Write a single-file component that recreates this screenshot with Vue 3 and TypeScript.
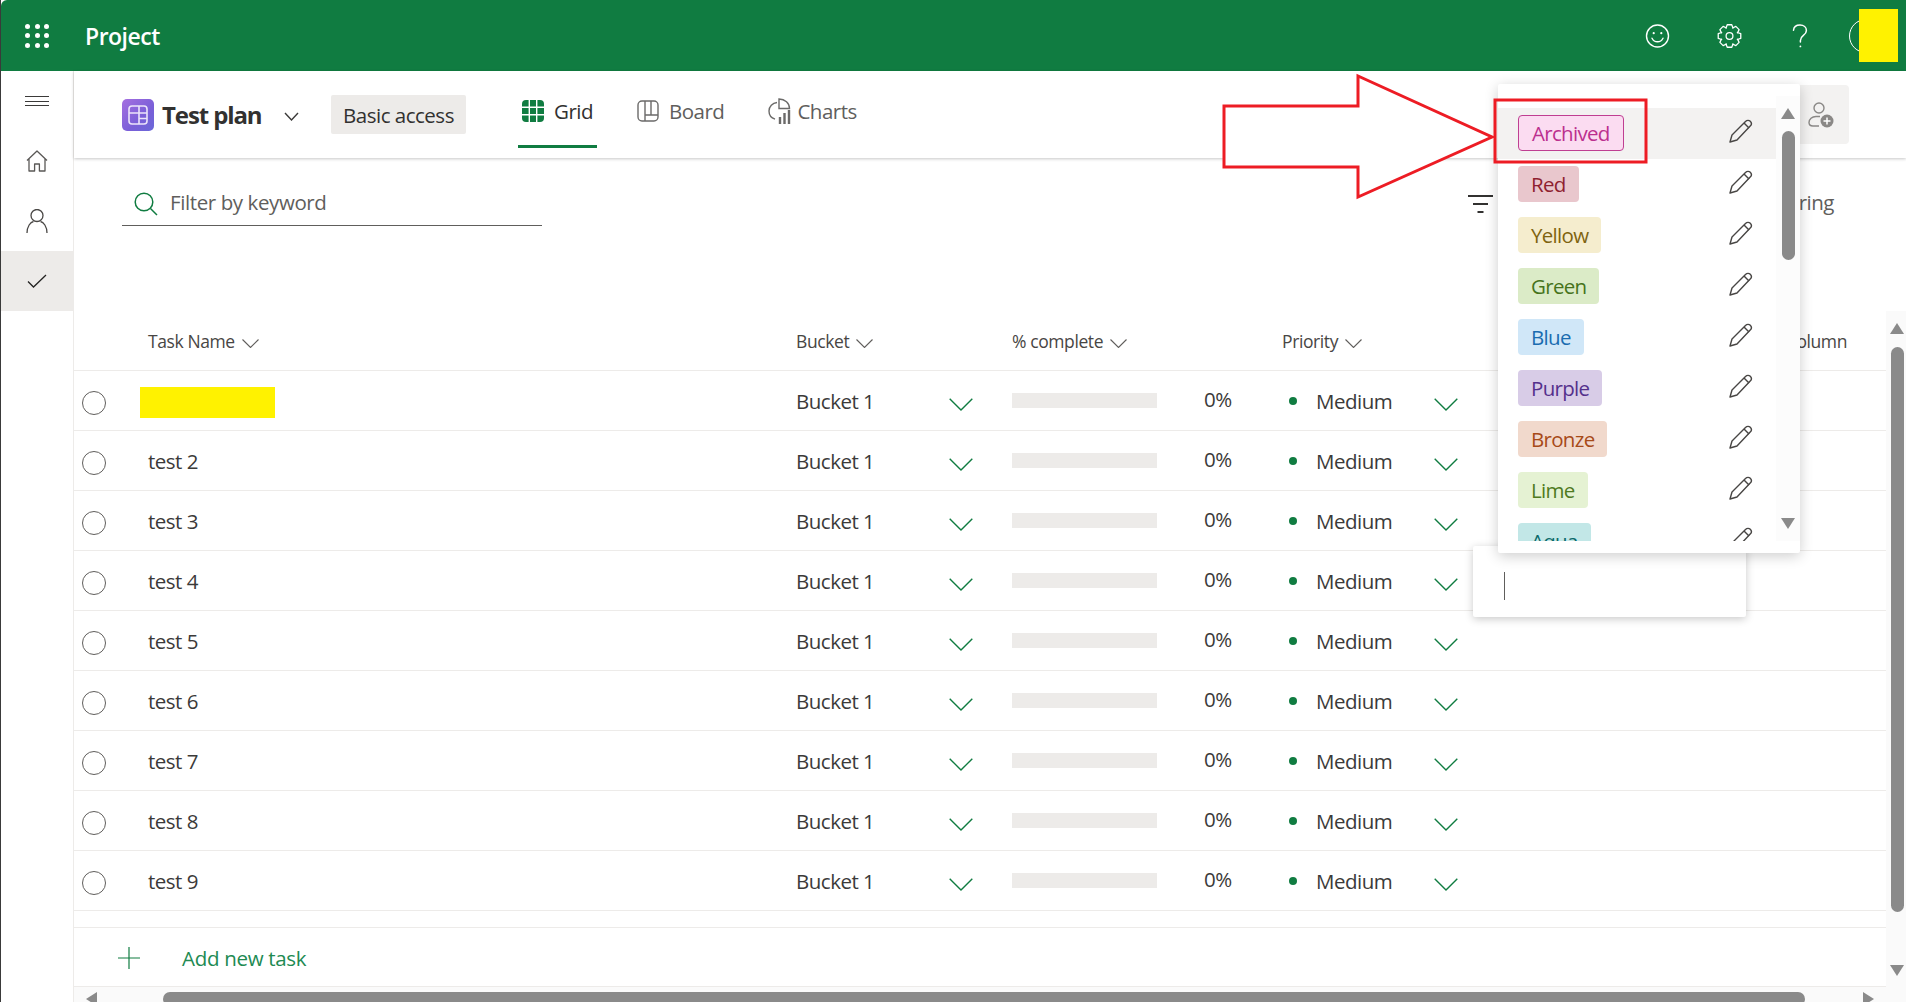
<script setup lang="ts">
const tasks: string[] = ['', 'test 2', 'test 3', 'test 4', 'test 5', 'test 6', 'test 7', 'test 8', 'test 9']
const labels: { name: string; cls: string }[] = [
  { name: 'Archived', cls: 'archived' },
  { name: 'Red', cls: 'red' },
  { name: 'Yellow', cls: 'yellow' },
  { name: 'Green', cls: 'green' },
  { name: 'Blue', cls: 'blue' },
  { name: 'Purple', cls: 'purple' },
  { name: 'Bronze', cls: 'bronze' },
  { name: 'Lime', cls: 'lime' },
  { name: 'Aqua', cls: 'aqua' },
]
const waffle: number[] = [0, 1, 2, 3, 4, 5, 6, 7, 8]

function gearPath(): string {
  const teeth = 8
  const cx = 12
  const cy = 12
  const out = 11.5
  const inn = 8.6
  const pts: string[] = []
  for (let i = 0; i < teeth; i++) {
    const a = (i * 2 * Math.PI) / teeth
    const w = 0.2
    const g = 0.42
    const p = (r: number, t: number) => `${(cx + r * Math.sin(t)).toFixed(2)} ${(cy - r * Math.cos(t)).toFixed(2)}`
    pts.push(`${i === 0 ? 'M' : 'L'}${p(inn, a - g)}`)
    pts.push(`L${p(out, a - w)}`)
    pts.push(`L${p(out, a + w)}`)
    pts.push(`L${p(inn, a + g)}`)
  }
  return pts.join(' ') + ' Z'
}
const gear = gearPath()
</script>

<template>
  <div class="app">
    <header class="topbar">
      <div class="waffle">
        <span v-for="d in waffle" :key="d" class="waffle-dot"></span>
      </div>
      <span class="brand">Project</span>
      <div class="top-actions">
        <svg class="top-icon smile" viewBox="0 0 24 24" fill="none" stroke="#fff" stroke-width="1.4">
          <circle cx="12" cy="12" r="11" />
          <circle cx="8.2" cy="9.2" r="1.1" fill="#fff" stroke="none" />
          <circle cx="15.8" cy="9.2" r="1.1" fill="#fff" stroke="none" />
          <path d="M6.5 14.2c1.2 2.4 3.2 3.6 5.5 3.6s4.3-1.2 5.5-3.6" stroke-linecap="round" />
        </svg>
        <svg class="top-icon gear" viewBox="0 0 24 24" fill="none" stroke="#fff" stroke-width="1.3" stroke-linejoin="round">
          <path :d="gear" />
          <circle cx="12" cy="12" r="3.4" />
        </svg>
        <svg class="top-icon help" viewBox="0 0 16 24" fill="none" stroke="#fff" stroke-width="1.5" stroke-linecap="round">
          <path d="M1.5 6.2C1.8 3 4.4 1 8 1c3.7 0 6.4 2.2 6.4 5.4 0 2.4-1.3 3.7-3 5-1.8 1.4-3 2.6-3 5v1.6" />
          <circle cx="8.4" cy="22.4" r="0.9" fill="#fff" stroke="none" />
        </svg>
        <div class="avatar">
          <span class="avatar-ring"></span>
          <span class="avatar-mask"></span>
        </div>
      </div>
    </header>

    <div class="body">
      <aside class="rail">
        <div class="rail-item burger">
          <span></span><span></span><span></span>
        </div>
        <div class="rail-item home">
          <svg width="22" height="22" viewBox="0 0 22 22" fill="none" stroke="#5a5856" stroke-width="1.3" stroke-linejoin="round">
            <path d="M1 10.5 11 1l10 9.5M3 8.6V21h5.6v-7h4.8v7H19V8.6" />
          </svg>
        </div>
        <div class="rail-item person">
          <svg width="22" height="24" viewBox="0 0 22 24" fill="none" stroke="#4a4846" stroke-width="1.3">
            <ellipse cx="11" cy="6.5" rx="6" ry="6" />
            <path d="M1 24c0-6.5 3.5-11 6.5-11.5M21 24c0-6.5-3.5-11-6.5-11.5" />
          </svg>
        </div>
        <div class="rail-item check">
          <svg width="20" height="14" viewBox="0 0 20 14" fill="none" stroke="#252423" stroke-width="1.3">
            <path d="M1 7.5 6.500 13 19 1" />
          </svg>
        </div>
      </aside>

      <main class="content">
        <div class="subhead">
          <div class="plan-icon">
            <svg width="20" height="20" viewBox="0 0 20 20" fill="none" stroke="#ebe4fa" stroke-width="1.6">
              <rect x="1" y="1" width="18" height="18" rx="3" />
              <path d="M1 8h18M11 1v18M11 13.5h8" />
            </svg>
          </div>
          <span class="plan-title">Test plan</span>
          <svg class="plan-chev" width="15" height="9" viewBox="0 0 15 9" fill="none" stroke="#3b3a39" stroke-width="1.4">
            <path d="M1 1l6.5 7L14 1" />
          </svg>
          <span class="access">Basic access</span>
          <nav class="tabs">
            <div class="tab active">
              <svg width="22" height="22" viewBox="0 0 22 22">
                <rect width="22" height="22" rx="4" fill="#107c41" />
                <path d="M7.3 0v22M14.7 0v22M0 7.3h22M0 14.7h22" stroke="#fff" stroke-width="1.4" />
              </svg>
              <span>Grid</span>
            </div>
            <div class="tab">
              <svg width="22" height="22" viewBox="0 0 22 22" fill="none" stroke="#6b6a69" stroke-width="1.4">
                <rect x="1" y="1" width="20" height="20" rx="4" />
                <path d="M8 1v20M14 1v14M8 15h13" />
              </svg>
              <span>Board</span>
            </div>
            <div class="tab charts">
              <svg width="24" height="26" viewBox="0 0 24 26" fill="none" stroke="#6b6a69" stroke-width="1.4">
                <path d="M9 4.500C4.500 5 1 8.600 1 13c0 3.800 2.500 7 6 8.200M11 1v9.500h10.500C21.500 5 17 1 11 1z" />
                <path d="M12 26v-7M16.500 26V15M21 26V12" stroke-width="2.400" />
              </svg>
              <span>Charts</span>
            </div>
          </nav>
          <button class="share">
            <svg width="26" height="26" viewBox="0 0 26 26" fill="none" stroke="#8a8886" stroke-width="1.4">
              <circle cx="11" cy="6" r="5" />
              <path d="M11 24H5c-2.500 0-4-1.300-4-3.500 0-3.500 3-6 7-6h4" />
              <circle cx="19" cy="19" r="6.500" fill="#8a8886" stroke="none" />
              <path d="M19 15.500v7M15.500 19h7" stroke="#fff" stroke-width="1.500" />
            </svg>
          </button>
        </div>

        <div class="filterbar">
          <div class="search">
            <svg class="search-icon" width="24" height="24" viewBox="0 0 24 24" fill="none" stroke="#107c41" stroke-width="1.500">
              <circle cx="10" cy="10" r="8.800" />
              <path d="M16.500 16.500 23 23" />
            </svg>
            <span>Filter by keyword</span>
          </div>
          <div class="filter-right">
            <svg width="25" height="18" viewBox="0 0 25 18" fill="none" stroke="#323130" stroke-width="1.800">
              <path d="M0 1h25M5 9h15M9.500 17h6" />
            </svg>
            <span class="filter-word">Filtering</span>
          </div>
        </div>

        <div class="grid-wrap">
          <div class="grid">
            <div class="row head">
              <div class="cell name-cell head-cell">Task Name<svg class="head-chev" width="17" height="9" viewBox="0 0 17 9" fill="none" stroke="#605e5c" stroke-width="1.100"><path d="M.5.5 8.500 8.500l8-8" /></svg></div>
              <div class="cell head-cell">Bucket<svg class="head-chev" width="17" height="9" viewBox="0 0 17 9" fill="none" stroke="#605e5c" stroke-width="1.100"><path d="M.5.5 8.500 8.500l8-8" /></svg></div>
              <div class="cell head-cell">% complete<svg class="head-chev" width="17" height="9" viewBox="0 0 17 9" fill="none" stroke="#605e5c" stroke-width="1.100"><path d="M.5.5 8.500 8.500l8-8" /></svg></div>
              <div class="cell head-cell">Priority<svg class="head-chev" width="17" height="9" viewBox="0 0 17 9" fill="none" stroke="#605e5c" stroke-width="1.100"><path d="M.5.5 8.500 8.500l8-8" /></svg></div>
              <div class="cell head-cell add-col">Add column</div>
            </div>
            <div v-for="(t, i) in tasks" :key="i" class="row">
              <div class="cell task">
                <span class="radio"></span>
                <span v-if="t" class="task-name">{{ t }}</span>
                <span v-else class="redacted"></span>
              </div>
              <div class="cell">
                <div class="bucket">
                  <span class="txt">Bucket 1</span>
                  <svg class="green-chev" width="24" height="13" viewBox="0 0 24 13" fill="none" stroke="#107c41" stroke-width="1.400"><path d="M.7.7 12 12 23.300.7" /></svg>
                </div>
              </div>
              <div class="cell progress">
                <span class="bar"></span>
                <span class="pct">0%</span>
              </div>
              <div class="cell">
                <div class="priority">
                  <span class="dot"></span>
                  <span class="txt">Medium</span>
                  <svg class="green-chev push" width="24" height="13" viewBox="0 0 24 13" fill="none" stroke="#107c41" stroke-width="1.400"><path d="M.7.7 12 12 23.300.7" /></svg>
                </div>
              </div>
              <div class="cell"></div>
            </div>
            <div class="spacer"></div>
            <div class="add-row">
              <svg class="plus" width="22" height="22" viewBox="0 0 22 22" stroke="#107c41" stroke-width="1.200"><path d="M11 0v22M0 11h22" /></svg>
              <span class="add-text">Add new task</span>
            </div>
          </div>
          <div class="vscroll">
            <span class="arrow up"></span>
            <span class="vthumb"></span>
            <span class="arrow down"></span>
          </div>
        </div>
        <div class="hscroll">
          <span class="arrow left"></span>
          <span class="hthumb"></span>
          <span class="arrow right"></span>
        </div>
      </main>
    </div>

    <div class="text-pop"><span class="caret"></span></div>

    <div class="label-pop">
      <div class="label-list">
        <div v-for="(l, i) in labels" :key="l.name" class="label-row" :class="{ hot: i === 0 }">
          <span class="pill" :class="l.cls">{{ l.name }}</span>
          <svg class="pencil" width="24" height="24" viewBox="0 0 24 24" fill="none" stroke="#484644" stroke-width="1.400" stroke-linejoin="round">
            <path d="M1 23 3 16 16.500 2.500c1.500-1.500 3.500-1.500 4.800-.2 1.400 1.400 1.400 3.300-.1 4.800L8 21Z" />
            <path d="M15 4l5 5" />
          </svg>
        </div>
      </div>
      <div class="pop-scroll">
        <span class="arrow up"></span>
        <span class="pop-thumb"></span>
        <span class="arrow down"></span>
      </div>
    </div>

    <svg class="annot" width="1906" height="1002" viewBox="0 0 1906 1002" fill="none">
      <path d="M1224 106H1358V76L1492 137 1358 197V167H1224Z" fill="#fff" stroke="#ed1c24" stroke-width="3" />
      <rect x="1495" y="100" width="151" height="62" stroke="#ed1c24" stroke-width="3" />
    </svg>
  </div>
</template>

<style>
html, body { margin: 0; padding: 0; overflow: hidden; background: #fff; }
</style>

<style scoped>
.app {
  position: relative;
  width: 1906px;
  height: 1002px;
  overflow: hidden;
  display: flex;
  flex-direction: column;
  box-sizing: border-box;
  background: #fff;
  border-left: 1px solid #3a3a3a;
  font-family: "Open Sans", "Noto Sans", sans-serif;
  color: #323130;
}
.topbar {
  flex: none;
  height: 71px;
  background: #107c41;
  display: flex;
  align-items: center;
  color: #fff;
  border-top-left-radius: 6px;
}
.waffle {
  margin-left: 24px;
  display: grid;
  grid-template-columns: repeat(3, 5px);
  grid-template-rows: repeat(3, 5px);
  gap: 4.5px;
}
.waffle-dot { background: #fff; border-radius: 50%; }
.brand {
  margin-left: 36px;
  font-size: 23px;
  font-weight: 600;
  letter-spacing: -0.5px;
}
.top-actions {
  margin-left: auto;
  display: flex;
  align-items: center;
}
.top-icon { display: block; height: 24px; }
.smile { width: 25px; }
.gear { width: 25px; margin-left: 47px; }
.help { width: 16px; margin-left: 50px; }
.avatar {
  position: relative;
  width: 49px;
  height: 53px;
  margin-left: 41px;
  margin-right: 8px;
}
.avatar-ring {
  position: absolute;
  left: 0;
  top: 10px;
  width: 34px;
  height: 34px;
  box-sizing: border-box;
  border-radius: 50%;
  border: 1px solid #fff;
}
.avatar-mask {
  position: absolute;
  left: 10px;
  top: 0;
  width: 39px;
  height: 53px;
  background: #fff200;
}
.body { flex: 1; min-height: 0; display: flex; }
.rail {
  flex: none;
  width: 72px;
  border-right: 1px solid #edebe9;
  display: flex;
  flex-direction: column;
}
.rail-item { display: flex; align-items: center; justify-content: center; }
.burger {
  flex-direction: column;
  gap: 3.500px;
  height: 60px;
}
.burger span { display: block; width: 24px; height: 1px; background: #3b3a39; }
.home { height: 60px; }
.person { height: 60px; }
.check { height: 60px; background: #edebe9; }
.content { flex: 1; min-width: 0; display: flex; flex-direction: column; }
.subhead {
  flex: none;
  height: 87px;
  box-sizing: border-box;
  display: flex;
  align-items: flex-start;
  padding-left: 48px;
  box-shadow: 0 1px 3px rgba(0, 0, 0, 0.22);
  position: relative;
}
.plan-icon {
  width: 32px;
  height: 32px;
  margin-top: 28px;
  border-radius: 5px;
  background: linear-gradient(135deg, #a56fe0, #7a5fd8 60%, #6a68d8);
  display: flex;
  align-items: center;
  justify-content: center;
}
.plan-title {
  margin-left: 8px;
  margin-top: 26px;
  font-size: 24px;
  line-height: 35px;
  font-weight: 700;
  letter-spacing: -1.1px;
  color: #323130;
  width: 122px;
  white-space: nowrap;
}
.plan-chev { margin-top: 41px; }
.access {
  margin-left: 32px;
  margin-top: 24px;
  width: 135px;
  height: 39px;
  box-sizing: border-box;
  background: #edebe9;
  border-radius: 2px;
  text-align: center;
  font-size: 20.500px;
  line-height: 40px;
  letter-spacing: -0.5px;
  white-space: nowrap;
}
.tabs {
  display: flex;
  gap: 36px;
  margin-left: 52px;
}
.tab {
  height: 77px;
  box-sizing: border-box;
  display: flex;
  align-items: center;
  gap: 10px;
  padding: 5px 4px 0;
  font-size: 20.500px;
  letter-spacing: -0.5px;
  color: #605e5c;
  white-space: nowrap;
  border-bottom: 3px solid transparent;
}
.tab.charts { gap: 5px; }
.tab.active { color: #323130; font-weight: 500; border-bottom-color: #107c41; }
.share {
  margin-left: auto;
  margin-right: 57px;
  margin-top: 14px;
  width: 58px;
  height: 59px;
  border: 0;
  padding: 0 0 0 17px;
  background: #f3f2f1;
  border-radius: 4px;
  display: flex;
  align-items: center;
  justify-content: flex-start;
  box-sizing: border-box;
}
.filterbar {
  flex: none;
  height: 153px;
  display: flex;
  align-items: flex-start;
  padding-left: 48px;
  box-sizing: border-box;
}
.search {
  margin-top: 33px;
  width: 420px;
  height: 35px;
  box-sizing: border-box;
  display: flex;
  align-items: center;
  gap: 12px;
  padding: 0 0 2px 12px;
  border-bottom: 1px solid #605e5c;
  color: #605e5c;
  font-size: 20.500px;
  letter-spacing: -0.4px;
}
.search span { margin-top: -10px; }
.search-icon { margin-top: -6px; }
.filter-right {
  margin-left: auto;
  margin-right: 72px;
  margin-top: 34px;
  display: flex;
  align-items: center;
  gap: 268px;
  height: 24px;
  font-size: 20.500px;
  letter-spacing: -0.5px;
  color: #605e5c;
}
.filter-word { margin-top: -4px; }
.grid-wrap { flex: 1; min-height: 0; display: flex; }
.grid { flex: 1; min-width: 0; display: flex; flex-direction: column; }
.row {
  display: grid;
  grid-template-columns: 722px 216px 270px 300px 1fr;
  height: 60px;
  flex: none;
  box-sizing: border-box;
  border-bottom: 1px solid #edebe9;
  align-items: center;
  font-size: 20.500px;
  letter-spacing: -0.5px;
  color: #3b3a39;
}
.cell { display: flex; align-items: center; min-width: 0; white-space: nowrap; }
.head-cell { font-size: 17.500px; letter-spacing: -0.4px; color: #484644; padding-top: 1px; }
.name-cell { padding-left: 74px; }
.head-chev { margin-left: 7px; margin-top: 4px; }
.add-col { justify-content: flex-end; padding-right: 39px; }
.task { padding-left: 8px; }
.radio {
  width: 24px;
  height: 24px;
  box-sizing: border-box;
  border-radius: 50%;
  border: 1.500px solid #605e5c;
  flex: none;
  margin-top: 4px;
}
.task-name { margin-left: 42px; }
.redacted {
  margin-left: 34px;
  margin-top: 4px;
  width: 135px;
  height: 31px;
  background: #fff200;
}
.bucket { width: 177px; display: flex; align-items: center; justify-content: space-between; }
.green-chev { margin-top: 8px; }
.progress { gap: 47px; }
.bar { width: 145px; height: 15px; background: #edebe9; }
.pct { margin-top: -3px; }
.priority { width: 176px; display: flex; align-items: center; }
.dot {
  width: 8px;
  height: 8px;
  border-radius: 50%;
  background: #107c41;
  margin-left: 7px;
  margin-right: 19px;
}
.push { margin-left: auto; }
.spacer { flex: none; height: 17px; border-bottom: 1px solid #edebe9; box-sizing: border-box; }
.add-row {
  flex: none;
  height: 59px;
  box-sizing: border-box;
  border-bottom: 1px solid #edebe9;
  display: flex;
  align-items: center;
  padding: 0 0 0 44px;
  gap: 42px;
  color: #218a52;
  font-size: 20.500px;
  letter-spacing: -0.3px;
}
.add-text { padding-top: 2px; }
.plus { margin-top: 2px; }
.vscroll {
  flex: none;
  width: 20px;
  background: #fafafa;
  display: flex;
  flex-direction: column;
  align-items: center;
  padding: 12px 0 0 2px;
  box-sizing: border-box;
}
.vthumb {
  width: 13px;
  height: 565px;
  margin-top: 13px;
  margin-bottom: 53px;
  border-radius: 7px;
  background: #8a8a8a;
}
.arrow { display: block; width: 0; height: 0; flex: none; }
.arrow.up { border-left: 7.500px solid transparent; border-right: 7.500px solid transparent; border-bottom: 11px solid #8a8a8a; }
.arrow.down { border-left: 7.500px solid transparent; border-right: 7.500px solid transparent; border-top: 11px solid #8a8a8a; }
.arrow.left { border-top: 7.500px solid transparent; border-bottom: 7.500px solid transparent; border-right: 11px solid #8a8a8a; }
.arrow.right { border-top: 7.500px solid transparent; border-bottom: 7.500px solid transparent; border-left: 11px solid #8a8a8a; }
.hscroll {
  flex: none;
  height: 15px;
  background: #fafafa;
  display: flex;
  align-items: flex-start;
  padding: 5px 0 0 12px;
  box-sizing: border-box;
}
.hscroll .arrow.right { margin-left: 58px; }
.hthumb {
  width: 1642px;
  height: 14px;
  margin-left: 66px;
  border-radius: 7px;
  background: #8a8a8a;
}
.text-pop {
  position: absolute;
  left: 1472px;
  top: 546px;
  width: 273px;
  height: 71px;
  box-sizing: border-box;
  background: #fff;
  border-radius: 2px;
  box-shadow: 0 2px 8px rgba(0, 0, 0, 0.22);
}
.caret {
  position: absolute;
  left: 31px;
  top: 26px;
  width: 1px;
  height: 28px;
  background: #605e5c;
}
.label-pop {
  position: absolute;
  left: 1497px;
  top: 84px;
  width: 302px;
  height: 469px;
  box-sizing: border-box;
  padding-top: 24px;
  background: #fff;
  border-radius: 2px;
  box-shadow: 0 3px 14px rgba(0, 0, 0, 0.2);
  display: flex;
  align-items: flex-start;
}
.label-list {
  width: 278px;
  height: 433px;
  overflow: hidden;
  flex: none;
}
.label-row {
  height: 51px;
  box-sizing: border-box;
  display: flex;
  align-items: center;
  justify-content: space-between;
  padding: 0 23px 0 20px;
}
.label-row.hot { background: #f3f2f1; }
.pencil { margin-top: -6px; flex: none; }
.pill {
  height: 36px;
  box-sizing: border-box;
  padding: 0 13px;
  border-radius: 4px;
  font-size: 20.500px;
  letter-spacing: -0.7px;
  line-height: 37px;
  margin-top: -2px;
  white-space: nowrap;
}
.archived { background: #fbdcf1; color: #bb2f8e; border: 1px solid #bf3f92; line-height: 35px; padding: 0 13px; }
.red { background: #e9c7cd; color: #8f1f30; }
.yellow { background: #f5edce; color: #7f6410; }
.green { background: #dbebc7; color: #46731b; }
.blue { background: #d0e7f8; color: #1a6cb0; }
.purple { background: #d8cce7; color: #54308c; }
.bronze { background: #f1d9cc; color: #a74a18; }
.lime { background: #e5f2d3; color: #4f7a1f; }
.aqua { background: #c2e7e7; color: #0b6a6a; }
.pop-scroll {
  flex: none;
  width: 24px;
  height: 445px;
  margin-top: -12px;
  background: #fcfcfc;
  display: flex;
  flex-direction: column;
  align-items: center;
  padding-top: 12px;
  box-sizing: border-box;
}
.pop-thumb {
  width: 13px;
  height: 129px;
  margin-top: 12px;
  margin-bottom: 258px;
  border-radius: 7px;
  background: #8a8a8a;
}
.annot { position: absolute; left: -1px; top: 0; pointer-events: none; }
</style>
